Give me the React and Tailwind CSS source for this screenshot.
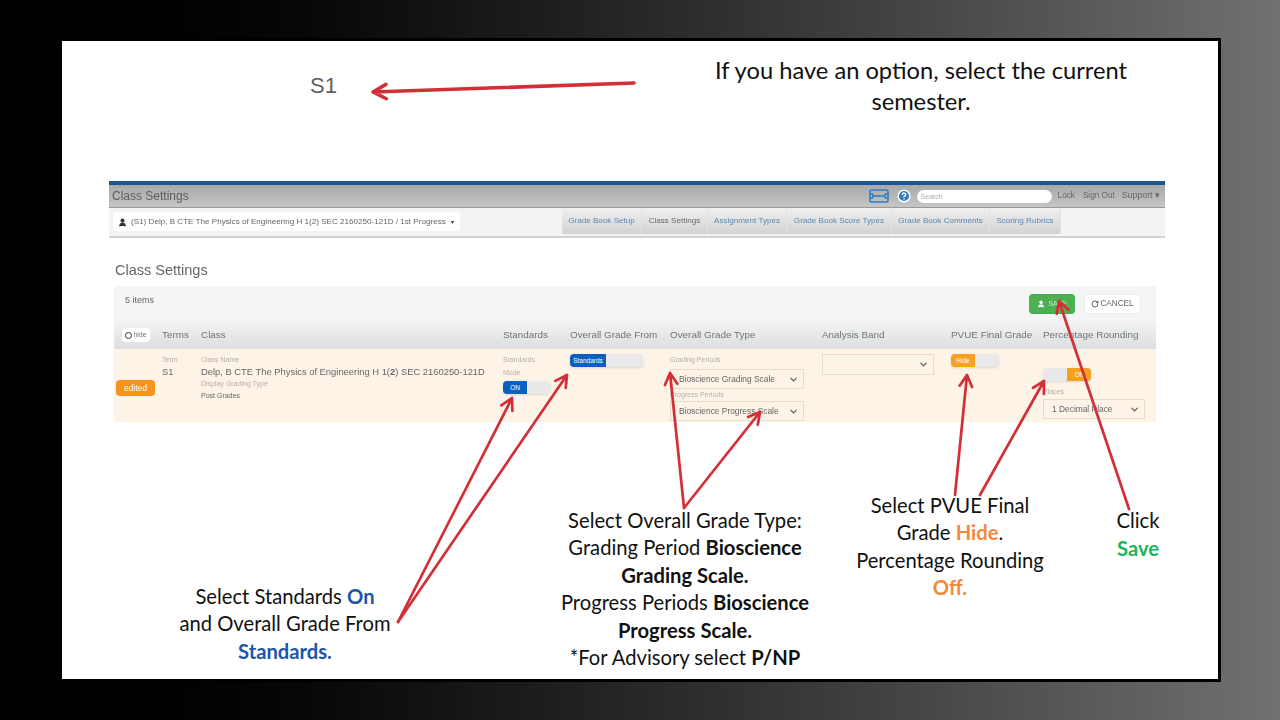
import React from 'react';
import { ChevronDown, HelpCircle, RotateCw, User } from 'lucide-react';

// red callout arrow, the head is worked out from the line direction
let Arrow = ({ x1, y1, x2, y2, head = 13, width = 2.7 }) => {
  let angle = Math.atan2(y1 - y2, x1 - x2);
  let ax = x2 + head * Math.cos(angle + 0.5);
  let ay = y2 + head * Math.sin(angle + 0.5);
  let bx = x2 + head * Math.cos(angle - 0.5);
  let by = y2 + head * Math.sin(angle - 0.5);
  return (
    <path
      d={`M${x1} ${y1}L${x2} ${y2}M${ax} ${ay}L${x2} ${y2}L${bx} ${by}`}
      fill="none"
      stroke="#d32f36"
      strokeWidth={width}
      strokeLinecap="round"
      strokeLinejoin="round"
    />
  );
};

let Toggle = ({ label, on = 'left', color, width, barWidth }) => (
  <div className={`flex h-[13px] rounded-sm overflow-hidden bg-[#e9e9e9] shadow-sm ${width} ${on === 'right' ? 'flex-row-reverse' : ''}`}>
    <div className={`flex items-center justify-center text-[6.5px] text-white ${color} ${barWidth}`}>{label}</div>
  </div>
);

let Select = ({ label, className }) => (
  <div className={`flex items-center justify-between h-[20px] border border-[#e6dccd] bg-[#fdf3e7] pl-2 pr-1 text-[8.4px] text-[#666] whitespace-nowrap ${className}`}>
    <span>{label}</span>
    <ChevronDown size={11} strokeWidth={2.5} className="text-[#555]" />
  </div>
);

let Small = ({ children }) => <div className="text-[7px] leading-[10px] text-[#b5b0a8]">{children}</div>;

let tabs = [
  ['Grade Book Setup', 'w-[80px]'],
  ['Class Settings', 'w-[66px] text-[#6a6a6a]'],
  ['Assignment Types', 'w-[79px] text-[#5a88b5]'],
  ['Grade Book Score Types', 'w-[105px] text-[#5a88b5]'],
  ['Grade Book Comments', 'w-[98px] text-[#5a88b5]'],
  ['Scoring Rubrics', 'w-[71px] text-[#5a88b5]'],
];

let Screenshot = () => (
  <div className="w-[1056px] h-[241px] ml-[47px] shrink-0 blur-[0.7px] font-['Liberation_Sans',sans-serif]">
    <div className="h-[4px] bg-[#1b5596]" />
    <div className="flex items-center h-[23px] pl-[3px] pr-[5px] bg-gradient-to-b from-[#a8a8a8] to-[#c6c6c6] border-b border-[#999]">
      <div className="text-[12px] text-[#5d5d5d]">Class Settings</div>
      <div className="ml-auto flex items-center">
        <svg width="20" height="14" viewBox="0 0 20 14" fill="none" stroke="#2f7fc4" strokeWidth="1.6">
          <rect x="1" y="1" width="18" height="12" rx="1.5" />
          <path d="M1 5h3M16 5h3M1 9h3M16 9h3M4 5v4M16 5v4M4 7h12" />
        </svg>
        <HelpCircle size={14} strokeWidth={2.5} className="ml-[8px] text-white fill-[#2f7fc4]" />
        <div className="w-[135px] h-[13px] ml-[6px] rounded-full bg-white pl-[4px] text-[7px] leading-[13px] text-[#aaa]">Search</div>
        <div className="ml-[6px] text-[8.2px] text-[#666]">Lock</div>
        <div className="ml-[8px] text-[8.2px] text-[#666]">Sign Out</div>
        <div className="ml-[7px] text-[8.8px] text-[#666]">Support ▾</div>
      </div>
    </div>
    <div className="flex h-[30px] bg-[#f3f3f3] border-b-2 border-[#d2d2d2]">
      <div className="flex items-center w-[347px] h-[19px] mt-[4px] ml-[4px] pt-[1px] bg-white rounded-sm pl-[5px] text-[8.1px] text-[#666]">
        <User size={9} strokeWidth={3} className="text-[#333] fill-[#333] mr-[4px]" />
        <span className="whitespace-nowrap">(S1) Delp, B CTE The Physics of Engineering H 1(2) SEC 2160250-121D / 1st Progress</span>
        <span className="ml-[5px] text-[6px] text-[#333]">▾</span>
      </div>
      <div className="flex h-[26px] ml-[102px] text-[8.1px] text-[#5a88b5]">
        {tabs.map(([name, w]) => (
          <div key={name} className={`flex items-center justify-center pt-[1px] bg-gradient-to-b from-[#f0f0f0] to-[#d2d2d2] border-r border-[#e4e4e4] whitespace-nowrap ${w}`}>
            {name}
          </div>
        ))}
      </div>
    </div>
    <div className="ml-[6px] mt-[21px] h-[27px] text-[14.5px] leading-[22px] text-[#666]">Class Settings</div>
    <div className="w-[1042px] ml-[5px] h-[136px]">
      <div className="flex h-[34px] bg-[#f5f5f5] pl-[11px] pr-[15px] pt-[8px]">
        <div className="text-[9px] text-[#666]">5 items</div>
        <div className="ml-auto flex items-start">
          <div className="flex items-center justify-center w-[46px] h-[20px] bg-[#4caf50] rounded-sm text-[7px] text-[#cfe8d0]">
            <User size={8} strokeWidth={3} className="text-white fill-white mr-[3px]" />
            SAVE
          </div>
          <div className="flex items-center justify-center w-[57px] h-[20px] ml-[9px] bg-white border border-[#eeeeee] rounded-sm text-[8.2px] text-[#666]">
            <RotateCw size={8} strokeWidth={2.5} className="mr-[1px] text-[#444]" />
            CANCEL
          </div>
        </div>
      </div>
      <div className="grid grid-cols-[48px_39px_302px_67px_100px_152px_129px_92px_113px] items-center h-[29px] pt-[1px] bg-gradient-to-b from-[#f4f4f4] to-[#dcdedf] text-[9.9px] text-[#6f7478] whitespace-nowrap">
        <div className="pl-[8px]">
          <div className="flex items-center justify-center w-[28px] h-[14px] bg-white rounded-sm text-[7px] text-[#777]">
            <span className="inline-block w-[7px] h-[7px] mr-[1px] rounded-full border-[1.5px] border-[#333]" />
            hide
          </div>
        </div>
        <div>Terms</div>
        <div>Class</div>
        <div>Standards</div>
        <div>Overall Grade From</div>
        <div>Overall Grade Type</div>
        <div>Analysis Band</div>
        <div>PVUE Final Grade</div>
        <div>Percentage Rounding</div>
      </div>
      <div className="grid grid-cols-[48px_39px_302px_67px_100px_152px_129px_92px_113px] h-[73px] bg-[#fdf3e7] pt-[6px]">
        <div className="pt-[25px]">
          <div className="flex items-center justify-center w-[39px] h-[16px] ml-[2px] rounded-sm bg-[#f7941d] text-[8.5px] text-white">edited</div>
        </div>
        <div>
          <Small>Term</Small>
          <div className="mt-[1px] text-[9.4px] leading-[11px] text-[#666]">S1</div>
        </div>
        <div>
          <Small>Class Name</Small>
          <div className="mt-[1px] text-[9.4px] leading-[11px] text-[#666] whitespace-nowrap">
            Delp, B CTE The Physics of Engineering H 1(<b>2</b>) SEC 2160250-121D
          </div>
          <div className="mt-[2px]"><Small>Display Grading Type</Small></div>
          <div className="mt-[2px] text-[7px] leading-[10px] text-[#666]">Post Grades</div>
        </div>
        <div>
          <Small>Standards</Small>
          <div className="mt-[3px]"><Small>Mode</Small></div>
          <div className="mt-[3px]">
            <Toggle label="ON" color="bg-[#0b5fc1]" width="w-[47px]" barWidth="w-[24px]" />
          </div>
        </div>
        <div className="-mt-[1px]">
          <Toggle label="Standards" color="bg-[#0b5fc1]" width="w-[73px]" barWidth="w-[36px]" />
        </div>
        <div>
          <Small>Grading Periods</Small>
          <Select label="Bioscience Grading Scale" className="w-[134px] mt-[4px]" />
          <div className="mt-[1px]"><Small>Progress Periods</Small></div>
          <Select label="Bioscience Progress Scale" className="w-[134px] mt-[1px]" />
        </div>
        <div className="-mt-[1px]">
          <Select label="" className="w-[112px] h-[21px]" />
        </div>
        <div className="-mt-[1px]">
          <Toggle label="Hide" color="bg-[#f7a11f]" width="w-[48px]" barWidth="w-[24px]" />
        </div>
        <div className="pt-[13px]">
          <Toggle label="Off" on="right" color="bg-[#f7a11f]" width="w-[48px]" barWidth="w-[24px]" />
          <div className="mt-[6px]"><Small>Places</Small></div>
          <Select label="1 Decimal Place" className="w-[102px] mt-[2px]" />
        </div>
      </div>
    </div>
  </div>
);

let Note = ({ className, children }) => (
  <div className={`shrink-0 text-center text-[20.2px] text-[#111] whitespace-nowrap ${className}`}>{children}</div>
);

let App = () => (
  <div className="relative flex items-center justify-center w-[1280px] h-[720px] overflow-hidden bg-gradient-to-r from-black to-[#717171]">
    <div className="flex flex-col w-[1162px] h-[644px] bg-white border-[3px] border-black font-['Lato',sans-serif]">
      <div className="flex h-[140px] shrink-0">
        <div className="w-[522px] pl-[248px] pt-[30px] text-[22px] leading-[30px] text-[#606060] font-['Liberation_Sans',sans-serif]">S1</div>
        <div className="w-[520px] ml-[77px] pt-[14px] text-center text-[23.7px] leading-[31px] text-[#111]">
          If you have an option, select the current
          <br />
          semester.
        </div>
      </div>
      <Screenshot />
      <div className="flex items-start flex-1 leading-[27.4px]">
        <Note className="w-[280px] ml-[83px] mt-[161px]">
          Select Standards <b className="text-[#1b56a8]">On</b>
          <br />
          and Overall Grade From
          <br />
          <b className="text-[#1b56a8]">Standards.</b>
        </Note>
        <Note className="w-[280px] ml-[120px] mt-[85px]">
          Select Overall Grade Type:
          <br />
          Grading Period <b>Bioscience</b>
          <br />
          <b>Grading Scale.</b>
          <br />
          Progress Periods <b>Bioscience</b>
          <br />
          <b>Progress Scale.</b>
          <br />
          *For Advisory select <b>P/NP</b>
        </Note>
        <Note className="w-[200px] ml-[25px] mt-[70px]">
          Select PVUE Final
          <br />
          Grade <b className="text-[#f28a3c]">Hide</b>.
          <br />
          Percentage Rounding
          <br />
          <b className="text-[#f28a3c]">Off.</b>
        </Note>
        <Note className="w-[70px] ml-[53px] mt-[84px] leading-[28px]">
          Click
          <br />
          <b className="text-[#16b85c]">Save</b>
        </Note>
      </div>
    </div>
    <svg className="absolute inset-0 pointer-events-none" width="1280" height="720" viewBox="0 0 1280 720">
      <Arrow x1={634} y1={83} x2={373} y2={92} head={15} width={3.6} />
      <Arrow x1={398} y1={622} x2={512} y2={398} />
      <Arrow x1={398} y1={622} x2={567} y2={375} />
      <Arrow x1={684} y1={508} x2={670} y2={373} />
      <Arrow x1={684} y1={508} x2={760} y2={412} />
      <Arrow x1={955} y1={495} x2={967} y2={375} />
      <Arrow x1={980} y1={495} x2={1044} y2={381} />
      <Arrow x1={1129} y1={509} x2={1059} y2={301} />
    </svg>
  </div>
);

export default App;
